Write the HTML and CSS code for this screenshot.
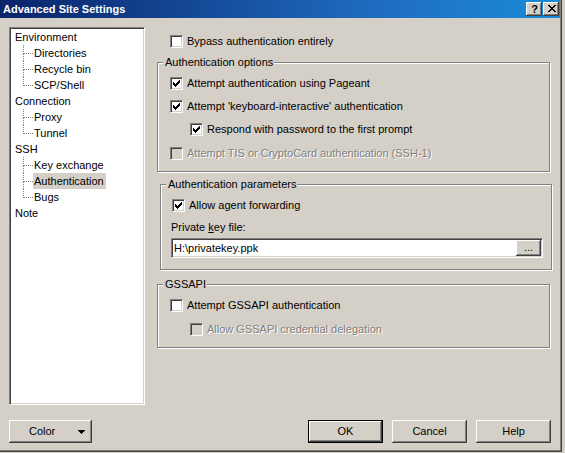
FILE: index.html
```html
<!DOCTYPE html>
<html>
<head>
<meta charset="utf-8">
<title>Advanced Site Settings</title>
<link rel="stylesheet" href="styles.css">
</head>
<body>
<div class="window">
  <div class="titlebar">
    <span class="title">Advanced Site Settings</span>
    <div class="caption-btns">
      <span class="cbtn cbtn-help">?</span>
      <span class="cbtn cbtn-close">
        <svg width="8" height="7" viewBox="0 0 8 7" shape-rendering="crispEdges"><path d="M0 0h2v1h-2z M6 0h2v1h-2z M1 1h2v1h-2z M5 1h2v1h-2z M2 2h4v1h-4z M3 3h2v1h-2z M2 4h4v1h-4z M1 5h2v1h-2z M5 5h2v1h-2z M0 6h2v1h-2z M6 6h2v1h-2z" fill="#000"/></svg>
      </span>
    </div>
  </div>
  <div class="main">
    <div class="tree">
      <ul class="tree-list">
        <li class="tree-parent"><span class="node">Environment</span></li>
        <li class="tree-child"><span class="conn"><span class="conn-top"></span><span class="conn-bot"></span></span><span class="node">Directories</span></li>
        <li class="tree-child"><span class="conn"><span class="conn-top"></span><span class="conn-bot"></span></span><span class="node">Recycle bin</span></li>
        <li class="tree-child last"><span class="conn"><span class="conn-top"></span><span class="conn-bot"></span></span><span class="node">SCP/Shell</span></li>
        <li class="tree-parent"><span class="node">Connection</span></li>
        <li class="tree-child"><span class="conn"><span class="conn-top"></span><span class="conn-bot"></span></span><span class="node">Proxy</span></li>
        <li class="tree-child last"><span class="conn"><span class="conn-top"></span><span class="conn-bot"></span></span><span class="node">Tunnel</span></li>
        <li class="tree-parent"><span class="node">SSH</span></li>
        <li class="tree-child"><span class="conn"><span class="conn-top"></span><span class="conn-bot"></span></span><span class="node">Key exchange</span></li>
        <li class="tree-child"><span class="conn"><span class="conn-top"></span><span class="conn-bot"></span></span><span class="node selected">Authentication</span></li>
        <li class="tree-child last"><span class="conn"><span class="conn-top"></span><span class="conn-bot"></span></span><span class="node">Bugs</span></li>
        <li class="tree-parent"><span class="node">Note</span></li>
      </ul>
    </div>
    <div class="pane">
      <div class="row row-bypass">
        <span class="check"></span><span class="label">Bypass authentication entirely</span>
      </div>

      <div class="group group-options">
        <span class="legend">Authentication options</span>
        <div class="row">
          <span class="check"><svg width="7" height="7" viewBox="0 0 7 7" shape-rendering="crispEdges"><path d="M6 0h1v1h-1z M5 1h2v1h-2z M0 2h1v1h-1z M4 2h3v1h-3z M0 3h2v1h-2z M3 3h3v1h-3z M0 4h5v1h-5z M1 5h3v1h-3z M2 6h1v1h-1z" fill="#000"/></svg></span><span class="label">Attempt authentication using Pageant</span>
        </div>
        <div class="row gap10">
          <span class="check"><svg width="7" height="7" viewBox="0 0 7 7" shape-rendering="crispEdges"><path d="M6 0h1v1h-1z M5 1h2v1h-2z M0 2h1v1h-1z M4 2h3v1h-3z M0 3h2v1h-2z M3 3h3v1h-3z M0 4h5v1h-5z M1 5h3v1h-3z M2 6h1v1h-1z" fill="#000"/></svg></span><span class="label">Attempt 'keyboard-interactive' authentication</span>
        </div>
        <div class="row gap10 nested">
          <span class="check"><svg width="7" height="7" viewBox="0 0 7 7" shape-rendering="crispEdges"><path d="M6 0h1v1h-1z M5 1h2v1h-2z M0 2h1v1h-1z M4 2h3v1h-3z M0 3h2v1h-2z M3 3h3v1h-3z M0 4h5v1h-5z M1 5h3v1h-3z M2 6h1v1h-1z" fill="#000"/></svg></span><span class="label">Respond with password to the first prompt</span>
        </div>
        <div class="row gap11 disabled">
          <span class="check"></span><span class="label">Attempt TIS or CryptoCard authentication (SSH-1)</span>
        </div>
      </div>

      <div class="group group-params">
        <span class="legend">Authentication parameters</span>
        <div class="row">
          <span class="check"><svg width="7" height="7" viewBox="0 0 7 7" shape-rendering="crispEdges"><path d="M6 0h1v1h-1z M5 1h2v1h-2z M0 2h1v1h-1z M4 2h3v1h-3z M0 3h2v1h-2z M3 3h3v1h-3z M0 4h5v1h-5z M1 5h3v1h-3z M2 6h1v1h-1z" fill="#000"/></svg></span><span class="label">Allow agent forwarding</span>
        </div>
        <div class="field-label">Private <u>k</u>ey file:</div>
        <div class="keyfile">
          <span class="keyfile-text">H:\privatekey.ppk</span>
          <span class="browse">...</span>
        </div>
      </div>

      <div class="group group-gss">
        <span class="legend">GSSAPI</span>
        <div class="row">
          <span class="check"></span><span class="label">Attempt GSSAPI authentication</span>
        </div>
        <div class="row gap11 nested disabled">
          <span class="check"></span><span class="label">Allow GSSAPI credential delegation</span>
        </div>
      </div>
    </div>
  </div>
  <div class="buttons">
    <div class="btn btn-color">
      <span class="btn-color-text">Color</span>
      <svg class="arrow" width="7" height="4" viewBox="0 0 7 4" shape-rendering="crispEdges"><path d="M0 0h7v1h-7z M1 1h5v1h-5z M2 2h3v1h-3z M3 3h1v1h-1z" fill="#000"/></svg>
    </div>
    <div class="spacer"></div>
    <div class="btn btn-default">OK</div>
    <div class="btn">Cancel</div>
    <div class="btn">Help</div>
  </div>
</div>
</body>
</html>
```
FILE: styles.css
```css
html, body {
  margin: 0;
  padding: 0;
}
body {
  background: #d4d0c8;
  font-family: "Liberation Sans", Arial, sans-serif;
  font-size: 11px;
  color: #000;
  width: 565px;
  height: 453px;
  overflow: hidden;
}
.window {
  width: 562px;
  height: 452px;
  box-sizing: border-box;
  background: #d4d0c8;
  box-shadow: inset -1px -1px 0 #404040, inset -2px -2px 0 #808080;
  display: flex;
  flex-direction: column;
}

/* title bar */
.titlebar {
  height: 18px;
  width: 560px;
  background: linear-gradient(to right, #0a246a 0%, #1f6fc4 70%, #1a8ad8 100%);
  display: flex;
  align-items: flex-start;
  flex-shrink: 0;
}
.title {
  color: #fff;
  font-weight: bold;
  font-size: 11px;
  line-height: 18px;
  padding-left: 3px;
  flex: 1;
  white-space: nowrap;
}
.caption-btns {
  display: flex;
  margin-top: 2px;
  margin-right: 1px;
  gap: 1px;
}
.cbtn {
  width: 16px;
  height: 14px;
  box-sizing: border-box;
  background: #d4d0c8;
  box-shadow: inset -1px -1px 0 #404040, inset 1px 1px 0 #fff, inset -2px -2px 0 #808080, inset 2px 2px 0 #d4d0c8;
  display: flex;
  align-items: center;
  justify-content: center;
}
.cbtn-help {
  font-weight: bold;
  font-size: 11px;
  line-height: 14px;
  padding-left: 1px;
}
.cbtn-close svg {
  display: block;
  margin-left: 1px;
  margin-top: -1px;
}

/* main area */
.main {
  display: flex;
  padding: 9px 0 0 9px;
  height: 378px;
  flex-shrink: 0;
}
.tree {
  width: 136px;
  height: 378px;
  box-sizing: border-box;
  background: #fff;
  border-top: 1px solid #808080;
  border-left: 1px solid #808080;
  border-right: 1px solid #fff;
  border-bottom: 1px solid #fff;
  box-shadow: inset 1px 1px 0 #404040, inset -1px -1px 0 #d4d0c8;
  padding: 1px 0 0 1px;
  flex-shrink: 0;
}
.tree-list {
  list-style: none;
  margin: 0;
  padding: 0;
}
.tree-list li {
  display: flex;
  height: 16px;
  white-space: nowrap;
}
.tree-parent {
  padding-left: 3px;
}
.tree-child {
  padding-left: 12px;
}
.node {
  display: inline-block;
  line-height: 16px;
  height: 16px;
  padding: 0 2px 0 1px;
}
.node.selected {
  background: #d4d0c8;
}
.conn {
  display: flex;
  flex-direction: column;
  width: 10px;
  height: 16px;
}
.conn-top {
  height: 9px;
  box-sizing: border-box;
  border-left: 1px dotted #808080;
  border-bottom: 1px dotted #808080;
}
.conn-bot {
  height: 7px;
  box-sizing: border-box;
  border-left: 1px dotted #808080;
}
.tree-child.last .conn-bot {
  border-left: none;
}

/* right pane */
.pane {
  margin-left: 12px;
  display: flex;
  flex-direction: column;
  align-items: flex-start;
}
.row {
  display: flex;
  align-items: center;
  height: 13px;
  white-space: nowrap;
}
.row-bypass {
  margin-top: 8px;
  margin-left: 13px;
}
.row.gap10 { margin-top: 10px; }
.row.gap11 { margin-top: 11px; }
.row.nested { margin-left: 20px; }
.check {
  width: 13px;
  height: 13px;
  box-sizing: border-box;
  background: #fff;
  border-top: 1px solid #808080;
  border-left: 1px solid #808080;
  border-right: 1px solid #fff;
  border-bottom: 1px solid #fff;
  box-shadow: inset 1px 1px 0 #404040, inset -1px -1px 0 #d4d0c8;
  padding: 2px;
  flex-shrink: 0;
}
.check svg {
  display: block;
}
.label {
  margin-left: 4px;
  line-height: 13px;
}
.disabled .check {
  background: #d4d0c8;
}
.disabled .label {
  color: #808080;
  text-shadow: 1px 1px 0 #fff;
}

.group {
  position: relative;
  box-sizing: border-box;
  border: 1px solid #808080;
  box-shadow: 1px 1px 0 #fff, inset 1px 1px 0 #fff;
  display: flex;
  flex-direction: column;
  align-items: flex-start;
}
.legend {
  position: absolute;
  top: -7px;
  left: 5px;
  line-height: 13px;
  padding: 0 1px 0 2px;
  background: #d4d0c8;
  white-space: nowrap;
}
.group-options {
  margin-top: 14px;
  width: 393px;
  height: 110px;
  padding: 14px 0 0 12px;
}
.group-params {
  margin-top: 12px;
  margin-left: 3px;
  width: 392px;
  height: 86px;
  padding: 14px 0 0 11px;
}
.group-gss {
  margin-top: 14px;
  width: 393px;
  height: 64px;
  padding: 14px 0 0 12px;
}
.field-label {
  margin-top: 9px;
  margin-left: -1px;
  line-height: 13px;
}
.keyfile {
  margin-top: 4px;
  margin-left: -1px;
  width: 372px;
  height: 20px;
  box-sizing: border-box;
  background: #fff;
  border-top: 1px solid #808080;
  border-left: 1px solid #808080;
  border-right: 1px solid #fff;
  border-bottom: 1px solid #fff;
  box-shadow: inset 1px 1px 0 #404040, inset -1px -1px 0 #d4d0c8;
  padding: 1px;
  display: flex;
  align-items: stretch;
}
.keyfile-text {
  flex: 1;
  line-height: 16px;
  padding-left: 1px;
}
.browse {
  width: 25px;
  height: 16px;
  box-sizing: border-box;
  background: #d4d0c8;
  box-shadow: inset -1px -1px 0 #404040, inset 1px 1px 0 #fff, inset -2px -2px 0 #808080;
  text-align: center;
  line-height: 15px;
  letter-spacing: 0;
}

/* bottom buttons */
.buttons {
  display: flex;
  margin-top: 15px;
  padding: 0 11px 0 9px;
  gap: 9px;
  height: 23px;
}
.spacer {
  flex: 1;
}
.btn {
  width: 75px;
  height: 23px;
  box-sizing: border-box;
  background: #d4d0c8;
  box-shadow: inset -1px -1px 0 #404040, inset 1px 1px 0 #fff, inset -2px -2px 0 #808080;
  display: flex;
  align-items: center;
  justify-content: center;
  line-height: 13px;
}
.btn-default {
  border: 1px solid #000;
}
.btn-color {
  width: 83px;
  justify-content: flex-start;
}
.btn-color-text {
  margin-left: 20px;
}
.arrow {
  display: block;
  margin-left: auto;
  margin-right: 7px;
}
```
